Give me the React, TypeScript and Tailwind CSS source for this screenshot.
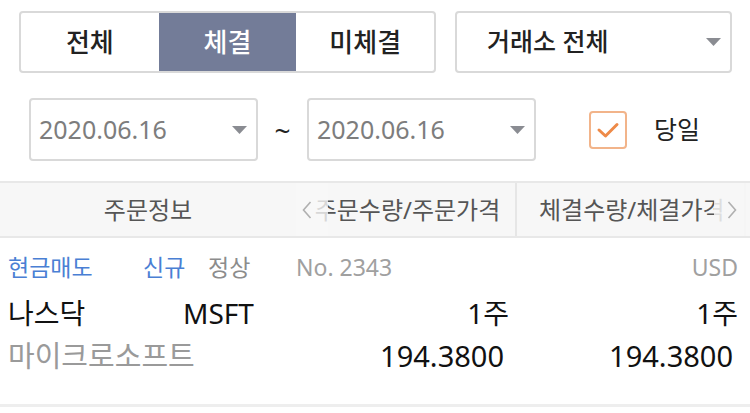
import React from "react";

const font = { fontFamily: '"Noto Sans", "Noto Sans CJK KR", sans-serif' };

function Caret({ className = "" }: { className?: string }) {
  return (
    <svg width="15" height="8" viewBox="0 0 15 8" className={className}>
      <path d="M0 0 H15 L7.5 8 Z" fill="#8a8c92" />
    </svg>
  );
}

function DateBox({ value }: { value: string }) {
  return (
    <div className="flex h-[63px] w-[229px] items-center justify-between rounded-[4px] border-2 border-[#d9d9d9] pl-[8px] pr-[9px]">
      <span className="text-[25px] text-[#7d7d7d]">{value}</span>
      <Caret />
    </div>
  );
}

export default function App() {
  return (
    <div className="relative h-[413px] w-[750px] overflow-hidden bg-white" style={font}>
      {/* 필터 탭 */}
      <div className="flex items-center pl-[19px] pt-[11px]">
        <div className="flex h-[62px] w-[417px] overflow-hidden rounded-[4px] border-2 border-[#d9d9d9]">
          <button className="flex-1 text-[26px] font-medium text-[#222]">전체</button>
          <button className="flex-1 bg-[#737c98] text-[26px] font-medium text-white">체결</button>
          <button className="flex-1 text-[26px] font-medium text-[#222]">미체결</button>
        </div>
        <div className="ml-[19px] flex h-[62px] w-[277px] items-center justify-between rounded-[4px] border-2 border-[#d9d9d9] pl-[30px] pr-[9px]">
          <span className="text-[25px] font-medium text-[#222]">거래소 전체</span>
          <Caret />
        </div>
      </div>

      {/* 기간 */}
      <div className="mt-[25px] flex items-center pl-[29px]">
        <DateBox value="2020.06.16" />
        <span className="w-[49px] text-center text-[28px] leading-none text-[#222]">~</span>
        <DateBox value="2020.06.16" />
        <div className="ml-[53px] flex h-[38px] w-[38px] items-center justify-center rounded-[4px] border-2 border-[#f2b48a]">
          <svg width="24" height="18" viewBox="0 0 24 18">
            <path d="M3 9 L9.5 15 L21 3.5" fill="none" stroke="#ee8a48" strokeWidth="3" strokeLinecap="round" strokeLinejoin="round" />
          </svg>
        </div>
        <span className="ml-[27px] text-[25px] text-[#222]">당일</span>
      </div>

      {/* 헤더 */}
      <div className="relative mt-[20px] flex h-[57px] border-y-2 border-[#e8e8e8] bg-[#f7f7f7] text-[24px] text-[#555]">
        <div className="flex w-[296px] items-center justify-center">주문정보</div>
        <div className="flex w-[221px] items-center justify-center overflow-hidden whitespace-nowrap border-r-2 border-[#e6e6e6] pl-[4px]">주문수량/주문가격</div>
        <div className="flex w-[229px] items-center overflow-hidden whitespace-nowrap border-r-2 border-[#e6e6e6] pl-[22px]">체결수량/체결가격</div>
        <div className="absolute left-[296px] top-0 flex h-full w-[32px] items-center bg-[#f7f7f7]/80 pl-[6px]">
          <svg width="10" height="18" viewBox="0 0 10 18">
            <path d="M8.5 1 L1.5 9 L8.5 17" fill="none" stroke="#b0b0b0" strokeWidth="1.6" />
          </svg>
        </div>
        <div className="absolute left-[714px] top-0 flex h-full w-[32px] items-center bg-[#f7f7f7]/85 pl-[13px]">
          <svg width="10" height="18" viewBox="0 0 10 18">
            <path d="M1.5 1 L8.5 9 L1.5 17" fill="none" stroke="#b0b0b0" strokeWidth="1.6" />
          </svg>
        </div>
      </div>

      {/* 주문 내역 */}
      <div className="border-b-[3px] border-[#eeeeee] pb-[32px] pl-[8px] pr-[12px] pt-[14px]">
        <div className="flex h-[30px] items-center text-[23px]">
          <span className="w-[135px] text-[#4a7fd4]">현금매도</span>
          <span className="w-[65px] text-[#4a7fd4]">신규</span>
          <span className="w-[88px] text-[#8c8c8c]">정상</span>
          <span className="text-[#a0a0a0]">No. 2343</span>
          <span className="ml-auto text-[#a0a0a0]">USD</span>
        </div>
        <div className="mt-[15px] flex h-[32px] items-center text-[28px] text-[#111]">
          <span className="w-[175px]">나스닥</span>
          <span className="w-[80px]">MSFT</span>
          <span className="w-[246px] text-right">1주</span>
          <span className="flex-1 text-right">1주</span>
        </div>
        <div className="mt-[11px] flex h-[32px] items-center text-[29px]">
          <span className="w-[255px] text-[29px] text-[#9a9a9a]">마이크로소프트</span>
          <span className="w-[241px] text-right text-[#111]">194.3800</span>
          <span className="w-[229px] text-right text-[#111]">194.3800</span>
        </div>
      </div>
    </div>
  );
}
